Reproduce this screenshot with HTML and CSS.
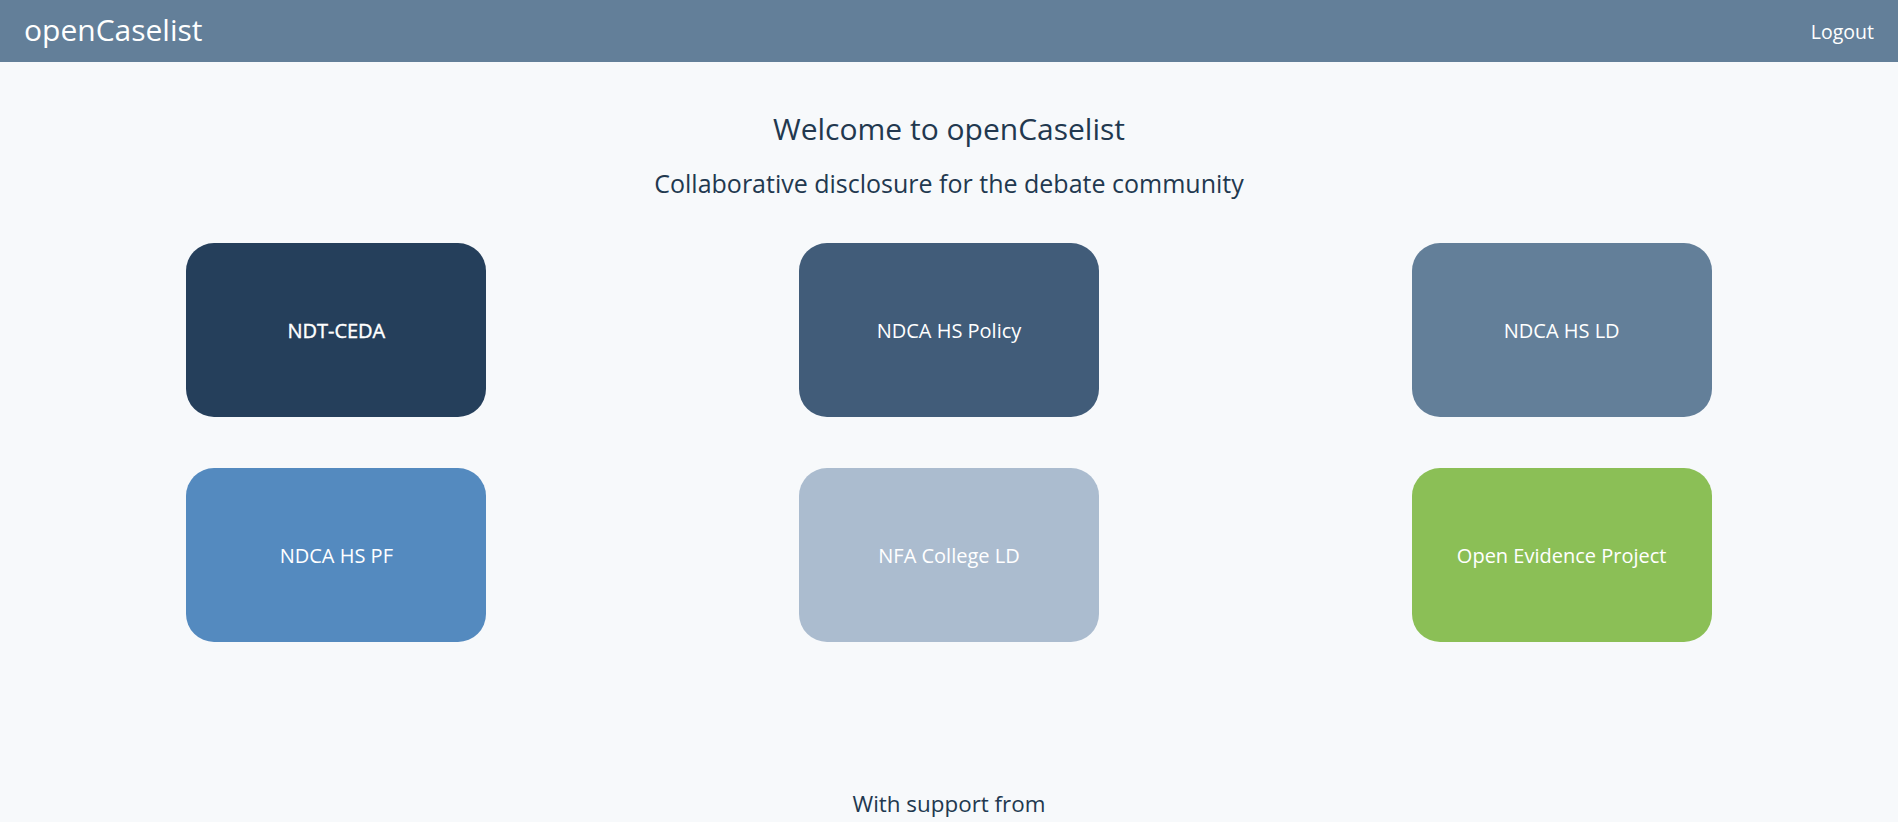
FILE: index.html
```html
<!DOCTYPE html>
<html>
<head>
    <meta name="viewport" content="width=device-width, initial-scale=1.0">
    <title>openCaselist</title>
    <link rel="stylesheet" href="styles.css">
</head>
<body>
    <div class="navbar">
        <a class="brand" href="#">openCaselist</a>
        <a class="logout" href="#">Logout</a>
    </div>

    <div class="home">
        <h1>Welcome to openCaselist</h1>
        <h2>Collaborative disclosure for the debate community</h2>

        <div class="caselists">
            <div class="cell"><a class="caselist ndt active" href="#">NDT-CEDA</a></div>
            <div class="cell"><a class="caselist policy" href="#">NDCA HS Policy</a></div>
            <div class="cell"><a class="caselist ld" href="#">NDCA HS LD</a></div>
            <div class="cell"><a class="caselist pf" href="#">NDCA HS PF</a></div>
            <div class="cell"><a class="caselist nfa" href="#">NFA College LD</a></div>
            <div class="cell"><a class="caselist openev" href="#">Open Evidence Project</a></div>
        </div>

        <h3 class="support">With support from</h3>
    </div>
</body>
</html>
```

FILE: styles.css
```css
body {
    font-family: "Open Sans", "Noto Sans", sans-serif;
    margin: 0;
    background-color: #f7f9fb;
    color: #22384f;
    overflow: hidden;
}
a {
    text-decoration: none;
}
.navbar {
    height: 62px;
    background-color: #637f99;
    display: flex;
    justify-content: space-between;
    align-items: center;
    padding: 0 24px;
}
.brand {
    color: white;
    font-size: 30px;
    margin-top: -3px;
}
.logout {
    color: white;
    font-size: 19.5px;
}
.home {
    padding: 49px 30px 0;
    text-align: center;
}
h1 {
    font-size: 30px;
    font-weight: 400;
    line-height: 1.2;
    margin: 0;
}
h2 {
    font-size: 25px;
    font-weight: 400;
    line-height: 1.2;
    margin: 21px 0 0;
}
.caselists {
    display: grid;
    grid-template-columns: 1fr 1fr 1fr;
    row-gap: 51px;
    margin-top: 45px;
}
.cell {
    display: flex;
    justify-content: center;
}
.caselist {
    width: 300px;
    height: 174px;
    border-radius: 28px;
    display: flex;
    align-items: center;
    justify-content: center;
    color: white;
    font-size: 20px;
}
/* selected caselist reads a bit heavier */
.caselist.active {
    -webkit-text-stroke: 0.4px white;
}
.ndt { background-color: #253f5b; }
.policy { background-color: #415c79; }
.ld { background-color: #637f99; }
.pf { background-color: #548abf; }
.nfa { background-color: #abbccf; }
.openev { background-color: #8bbf56; }
.support {
    font-size: 22.4px;
    font-weight: 400;
    line-height: 1.2;
    margin: 149px 0 0;
}
```
